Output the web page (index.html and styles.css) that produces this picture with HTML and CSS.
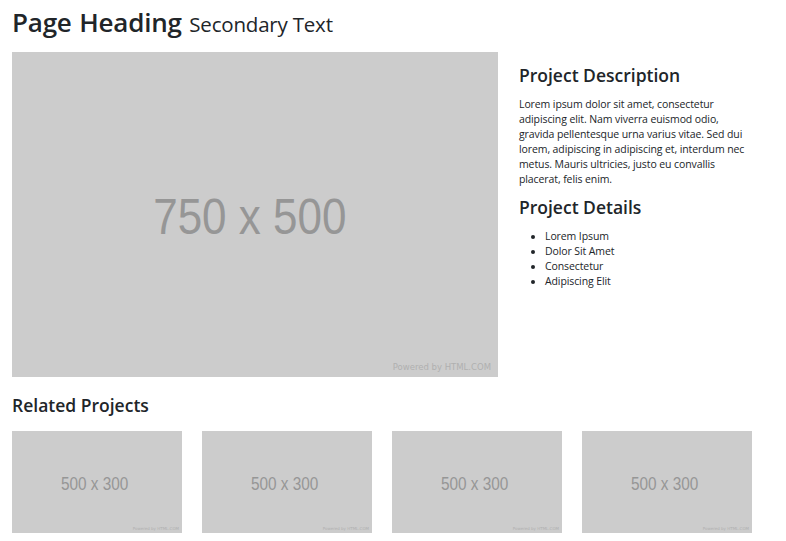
FILE: index.html
```html
<!DOCTYPE html>
<html>
<head>
<meta charset="utf-8">
<link rel="stylesheet" href="styles.css">
</head>
<body>
<div class="page">
  <h1 class="title">Page Heading <small>Secondary Text</small></h1>
  <div class="row">
    <div class="ph ph-main">
      <span class="ph-label">750 x 500</span>
      <span class="ph-credit">Powered by HTML.COM</span>
    </div>
    <div class="side">
      <h3 class="sub">Project Description</h3>
      <p class="desc">Lorem ipsum dolor sit amet, consectetur adipiscing elit. Nam viverra euismod odio, gravida pellentesque urna varius vitae. Sed dui lorem, adipiscing in adipiscing et, interdum nec metus. Mauris ultricies, justo eu convallis placerat, felis enim.</p>
      <h3 class="sub">Project Details</h3>
      <ul class="details">
        <li>Lorem Ipsum</li>
        <li>Dolor Sit Amet</li>
        <li>Consectetur</li>
        <li>Adipiscing Elit</li>
      </ul>
    </div>
  </div>
  <h3 class="sub related">Related Projects</h3>
  <div class="thumbs">
    <div class="ph ph-thumb"><span class="ph-label">500 x 300</span><span class="ph-credit">Powered by HTML.COM</span></div>
    <div class="ph ph-thumb"><span class="ph-label">500 x 300</span><span class="ph-credit">Powered by HTML.COM</span></div>
    <div class="ph ph-thumb"><span class="ph-label">500 x 300</span><span class="ph-credit">Powered by HTML.COM</span></div>
    <div class="ph ph-thumb"><span class="ph-label">500 x 300</span><span class="ph-credit">Powered by HTML.COM</span></div>
  </div>
</div>
</body>
</html>
```

FILE: styles.css
```css
* { box-sizing: border-box; }
html, body { margin: 0; padding: 0; background: #fff; }
body {
  font-family: "Open Sans", "Noto Sans", sans-serif;
  color: #212529;
  overflow: hidden;
}
.page {
  padding: 0 12px;
}
.title {
  margin: 0;
  padding-top: 5px;
  height: 52px;
  font-size: 26px;
  font-weight: 600;
  line-height: 34px;
  letter-spacing: -0.2px;
  word-spacing: 1px;
}
.title small {
  font-size: 20.5px;
  font-weight: 400;
  letter-spacing: -0.2px;
  word-spacing: 0;
}
.row {
  display: flex;
  gap: 21px;
}
.ph {
  position: relative;
  background: #cccccc;
  display: flex;
  align-items: center;
  justify-content: center;
  flex: none;
}
.ph-label {
  font-family: "Liberation Sans", Arial, sans-serif;
  color: #969696;
}
.ph-credit {
  position: absolute;
  font-family: "DejaVu Sans", sans-serif;
  color: #b0b0b0;
  white-space: nowrap;
}
.ph-main {
  width: 486px;
  height: 325px;
}
.ph-main .ph-label {
  font-size: 50px;
  transform: scaleX(0.88);
  margin-top: 4px;
  margin-left: -11px;
}
.ph-main .ph-credit {
  font-size: 8.5px;
  right: 7px;
  bottom: 5px;
}
.side {
  width: 228px;
  padding-top: 11px;
}
.sub {
  margin: 0;
  font-size: 17.5px;
  font-weight: 600;
  line-height: 24px;
  letter-spacing: 0;
}
.desc {
  margin: 10px 0 8px;
  font-size: 10.5px;
  line-height: 15px;
  letter-spacing: -0.1px;
}
.details {
  margin: 10px 0 0;
  padding-left: 26px;
  font-size: 10.5px;
  line-height: 15px;
  letter-spacing: -0.1px;
}
.related {
  margin-top: 16px;
  height: 38px;
}
.thumbs {
  display: flex;
  gap: 20px;
}
.ph-thumb {
  width: 170px;
  height: 102px;
}
.ph-thumb .ph-label {
  font-size: 18.5px;
  transform: scaleX(0.83);
  margin-top: 3px;
  margin-left: -5px;
}
.ph-thumb .ph-credit {
  font-size: 4px;
  right: 3px;
  bottom: 2px;
}
```
